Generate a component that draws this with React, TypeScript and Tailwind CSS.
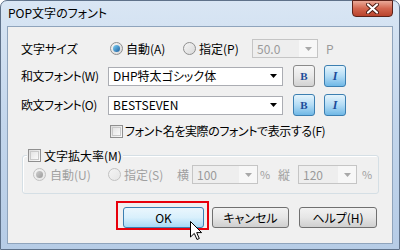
import React from "react";

const FONT = { fontFamily: '"Noto Sans CJK JP", "Noto Sans", sans-serif' };

function Radio({ checked, disabled }: { checked?: boolean; disabled?: boolean }) {
  return (
    <span
      className={
        "relative inline-flex items-center justify-center w-[13px] h-[13px] rounded-full border shrink-0 " +
        (disabled
          ? "border-[#c2c2c2] bg-gradient-to-br from-[#f4f4f4] to-[#e6e6e6]"
          : "border-[#8f8f8f] bg-gradient-to-br from-[#f5f5f5] to-[#d9d9d9]")
      }
    >
      {checked && (
        <span
          className={
            "w-[7px] h-[7px] rounded-full " +
            (disabled
              ? "bg-gradient-to-br from-[#d0d0d0] to-[#9a9a9a]"
              : "bg-gradient-to-br from-[#7fd3f7] to-[#1a5e9e]")
          }
        />
      )}
    </span>
  );
}

function Check({ disabled }: { disabled?: boolean }) {
  return (
    <span
      className={
        "inline-block w-[13px] h-[13px] border shrink-0 " +
        (disabled ? "border-[#c2c2c2] bg-[#f4f4f4]" : "border-[#8f8f8f] bg-gradient-to-br from-[#dcdcdc] to-[#fbfbfb]")
      }
    >
      <span className="block m-[1px] w-[9px] h-[9px] border border-[#c9c9c9] bg-gradient-to-br from-[#e4e4e4] to-[#fafafa]" />
    </span>
  );
}

function Select({ text, width, disabled }: { text: string; width: string; disabled?: boolean }) {
  return (
    <div
      className={
        "flex items-center h-[19px] border shrink-0 " +
        width +
        (disabled ? " border-[#c5c5c5] bg-[#f7f7f7]" : " border-[#abadb3] bg-white")
      }
    >
      <span
        className={
          "flex-1 h-full flex items-center pl-[4px] text-[12px] leading-none whitespace-nowrap " +
          (disabled ? "text-[#9a9a9a] bg-[#eeeeee] mr-[1px]" : "text-black")
        }
      >
        {text}
      </span>
      <span className="w-[17px] h-full flex items-center justify-center">
        <svg width="7" height="4" viewBox="0 0 7 4">
          <path d="M0 0H7L3.5 4Z" fill={disabled ? "#a8a8a8" : "#000"} />
        </svg>
      </span>
    </div>
  );
}

function StyleBtn({ kind, pressed }: { kind: "B" | "I"; pressed?: boolean }) {
  return (
    <div
      className={
        "w-[22px] h-[22px] rounded-[3px] border flex items-center justify-center shrink-0 " +
        (pressed
          ? "border-[#3c7fb1] bg-gradient-to-b from-[#e5f4fc] via-[#b3dcf5] to-[#6fb8e6]"
          : "border-[#8a8a8a] bg-gradient-to-b from-[#f6f6f6] via-[#e8e8e8] to-[#d2d2d2]")
      }
    >
      {kind === "B" ? (
        <span className="text-[11px] font-bold text-[#1c4c9a] leading-none" style={{ fontFamily: '"Liberation Serif", serif' }}>
          B
        </span>
      ) : (
        <span className="text-[12px] font-bold italic text-[#1c4c9a] leading-none" style={{ fontFamily: '"Liberation Serif", serif' }}>
          I
        </span>
      )}
    </div>
  );
}

function Button({ label, focus, width }: { label: string; focus?: boolean; width: string }) {
  return (
    <div
      className={
        "h-[21px] rounded-[3px] border flex items-center justify-center text-[12px] leading-none text-black shrink-0 whitespace-nowrap " +
        width +
        (focus
          ? " border-[#3c7fb1] bg-gradient-to-b from-[#eaf6fd] via-[#d9f0fc] to-[#a7d9f5]"
          : " border-[#707070] bg-gradient-to-b from-[#f2f2f2] via-[#e6e6e6] to-[#cfcfcf]")
      }
    >
      {label}
    </div>
  );
}

export default function App() {
  return (
    <div className="w-[400px] h-[251px] overflow-hidden bg-white [font-feature-settings:'palt'] whitespace-nowrap" style={FONT}>
      <div className="flex flex-col w-[400px] h-[250px] rounded-t-[7px] border border-[#5f728a] bg-gradient-to-b from-[#d9e6f4] via-[#c3d6ec] to-[#b6cce6]">
        <div className="h-[25px] flex items-start justify-between pl-[7px] pr-[6px] shrink-0">
          <span className="text-[12px] leading-none text-black mt-[6px]">POP文字のフォント</span>
          <div className="w-[41px] h-[17px] -mt-[1px] rounded-b-[4px] border border-[#5b2219] bg-gradient-to-b from-[#e9a998] via-[#d2664f] to-[#b8432c] flex items-center justify-center">
            <svg width="13" height="11" viewBox="0 0 13 11">
              <path d="M2 1.5L11 9.5M11 1.5L2 9.5" stroke="#4a1a12" strokeWidth="4" strokeLinecap="round" />
              <path d="M2 1.5L11 9.5M11 1.5L2 9.5" stroke="#fff" strokeWidth="2.2" strokeLinecap="round" />
            </svg>
          </div>
        </div>
        <div className="mx-[6px] h-[218px] bg-[#f0f0f0] border border-[#8fa4bc] flex flex-col pl-[13px] text-[12px] leading-none text-black">
          {/* Row 1 */}
          <div className="flex items-center h-[19px] mt-[12px]">
            <span className="w-[89px] shrink-0">文字サイズ</span>
            <div className="flex items-center gap-[3px] w-[73px] shrink-0">
              <Radio checked />
              <span>自動(A)</span>
            </div>
            <div className="flex items-center gap-[3px] w-[69px] shrink-0">
              <Radio />
              <span>指定(P)</span>
            </div>
            <Select text="50.0" width="w-[66px]" disabled />
            <span className="ml-[8px] text-[#9a9a9a]">P</span>
          </div>
          {/* Row 2 */}
          <div className="flex items-center h-[22px] mt-[7px]">
            <span className="w-[87px] shrink-0 tracking-[-0.5px]">和文フォント(W)</span>
            <Select text="DHP特太ゴシック体" width="w-[175px]" />
            <div className="ml-[10px]"><StyleBtn kind="B" /></div>
            <div className="ml-[9px]"><StyleBtn kind="I" pressed /></div>
          </div>
          {/* Row 3 */}
          <div className="flex items-center h-[22px] mt-[7px]">
            <span className="w-[87px] shrink-0 tracking-[-0.5px]">欧文フォント(O)</span>
            <Select text="BESTSEVEN" width="w-[175px]" />
            <div className="ml-[10px]"><StyleBtn kind="B" pressed /></div>
            <div className="ml-[9px]"><StyleBtn kind="I" pressed /></div>
          </div>
          {/* Row 4 */}
          <div className="flex items-center h-[14px] mt-[8px] ml-[89px] gap-[1px]">
            <Check />
            <span className="ml-[1px] tracking-[-0.4px]">フォント名を実際のフォントで表示する(F)</span>
          </div>
          {/* Group */}
          <div className="relative mt-[11px] ml-[1px] w-[357px] h-[45px]">
            <div className="mt-[6px] h-[39px] rounded-[3px] border border-[#d5dfe5] shadow-[inset_1px_1px_0_#fff] pl-[10px] pt-[9px]">
              <div className="flex items-center h-[19px] text-[#a0a0a0]">
                <div className="flex items-center gap-[4px] w-[75px] shrink-0">
                  <Radio checked disabled />
                  <span>自動(U)</span>
                </div>
                <div className="flex items-center gap-[3px] w-[69px] shrink-0">
                  <Radio disabled />
                  <span>指定(S)</span>
                </div>
                <span className="w-[15px] shrink-0">横</span>
                <Select text="100" width="w-[66px]" disabled />
                <span className="ml-[2px] w-[18px] shrink-0 text-[11px]">%</span>
                <span className="w-[20px] shrink-0">縦</span>
                <Select text="120" width="w-[59px]" disabled />
                <span className="ml-[5px] text-[11px]">%</span>
              </div>
            </div>
            <div className="absolute left-[5px] top-0 flex items-center gap-[3px] bg-[#f0f0f0] px-[1px] h-[13px]">
              <Check />
              <span>文字拡大率(M)</span>
            </div>
          </div>
          {/* Buttons */}
          <div className="flex items-center h-[21px] mt-[13px] ml-[102px]">
            <div className="relative">
              <Button label="OK" focus width="w-[81px]" />
              <div className="absolute left-[-7px] top-[-6px] w-[93px] h-[29px] border-2 border-[#e8000b]" />
              <svg className="absolute left-[67px] top-[14px]" width="13" height="20" viewBox="0 0 13 20">
                <path d="M0.5 0.5V16L4.3 12.4L7 18.5L9.3 17.5L6.7 11.6H11.6Z" fill="#fff" stroke="#000" strokeWidth="1" strokeLinejoin="round" />
              </svg>
            </div>
            <div className="ml-[8px]"><Button label="キャンセル" width="w-[77px]" /></div>
            <div className="ml-[10px]"><Button label="ヘルプ(H)" width="w-[78px]" /></div>
          </div>
        </div>
      </div>
    </div>
  );
}
